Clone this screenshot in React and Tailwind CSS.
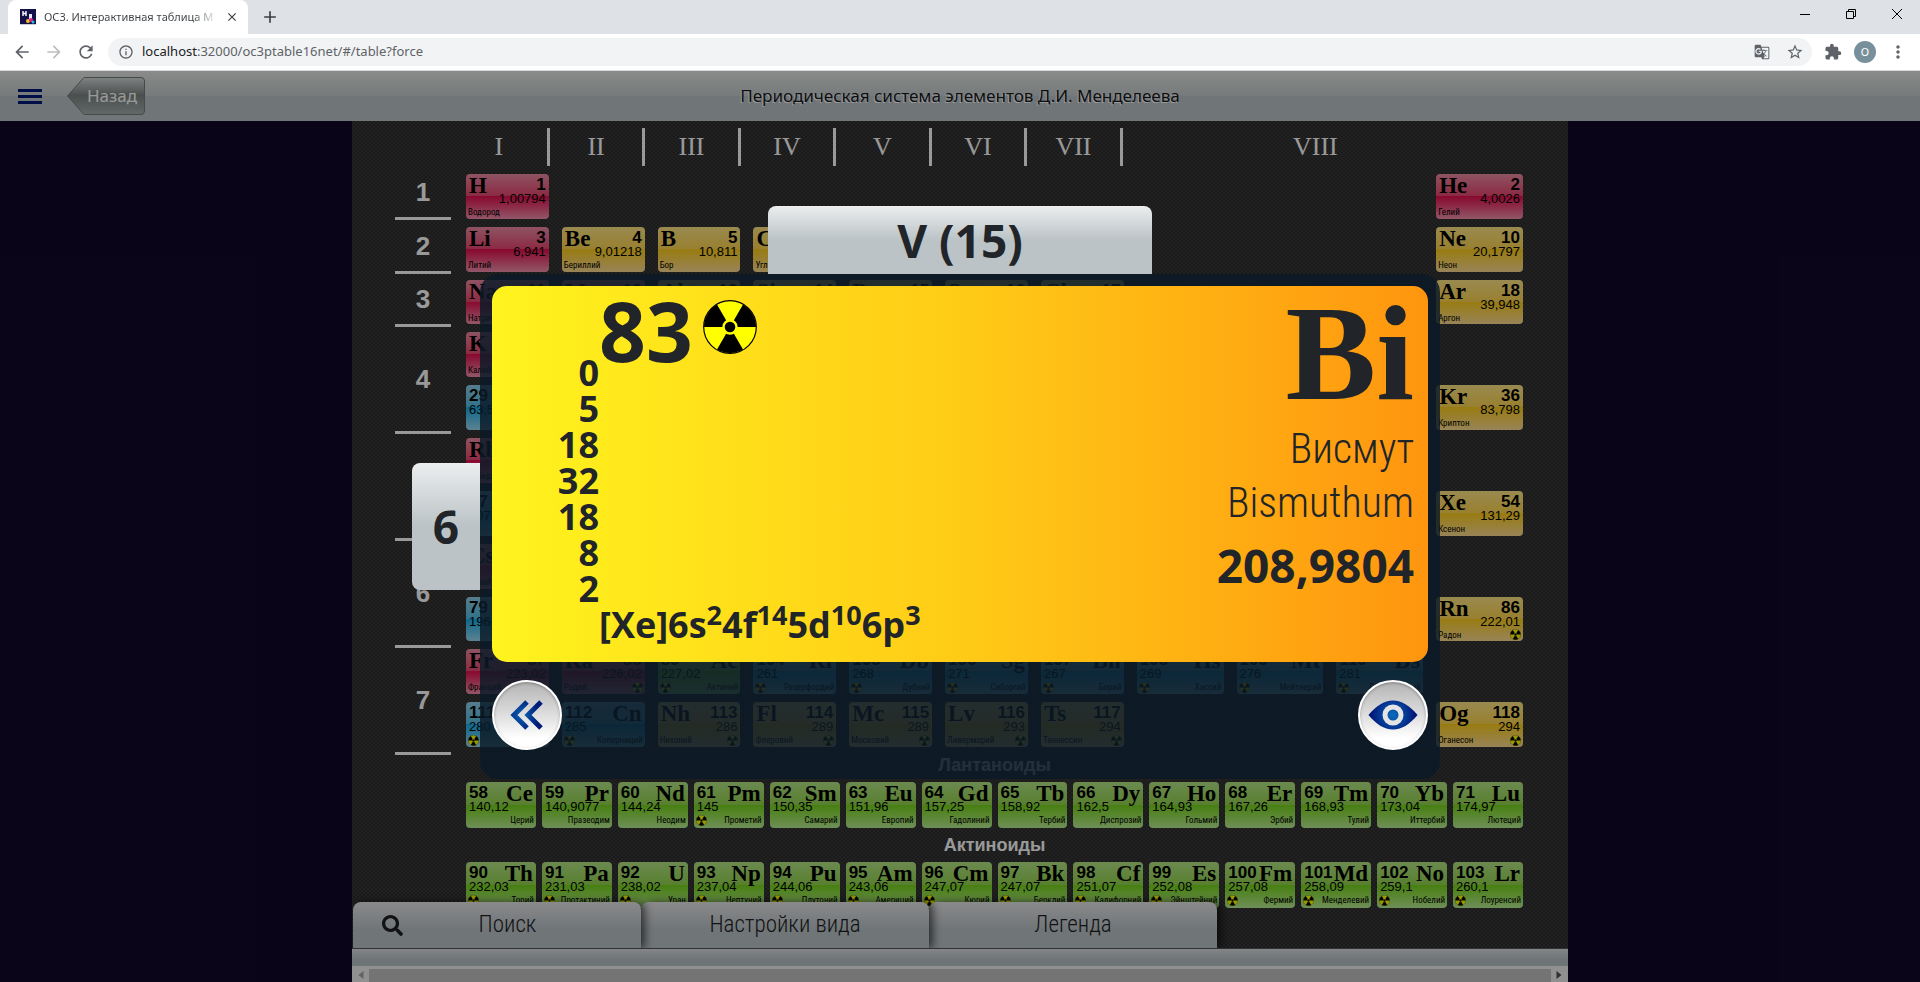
import React from 'react';
import clsx from 'clsx';
import {
  MdAdd,
  MdArrowBack,
  MdArrowForward,
  MdClose,
  MdExtension,
  MdGTranslate,
  MdInfoOutline,
  MdMoreVert,
  MdRefresh,
  MdStarBorder,
} from 'react-icons/md';
import { FaSearch } from 'react-icons/fa';

const groups = ['I', 'II', 'III', 'IV', 'V', 'VI', 'VII', 'VIII'];

const periods = [1, 2, 3, 4, 5, 6, 7];

const rows = [
  'row-start-1', 'row-start-2', 'row-start-3', 'row-start-4', 'row-start-5', 'row-start-6',
  'row-start-7', 'row-start-8', 'row-start-9', 'row-start-10', 'row-start-11',
];

const cols = [
  'col-start-1', 'col-start-2', 'col-start-3', 'col-start-4', 'col-start-5', 'col-start-6',
  'col-start-7', 'col-start-8', 'col-start-9', 'col-start-10', 'col-start-11',
];

const fills = {
  s: 'bg-[linear-gradient(#ee8ba5,#e8476f_49%,#e31150_50%,#f490ad)]',
  p: 'bg-[linear-gradient(#ffe685,#ffd650_49%,#fdce1e_50%,#fddc92)]',
  d: 'bg-[linear-gradient(#8fd0ec,#52bfe8_49%,#17aee8_50%,#9ad8f0)]',
  f: 'bg-[linear-gradient(#b4e685,#93d550_49%,#76d51b_50%,#b9ee93)]',
};

// [row, col, block, number, symbol, mass, name, radioactive]
const elements = [
  [1, 1, 's', 1, 'H', '1,00794', 'Водород'],
  [1, 11, 's', 2, 'He', '4,0026', 'Гелий'],
  [2, 1, 's', 3, 'Li', '6,941', 'Литий'],
  [2, 2, 'p', 4, 'Be', '9,01218', 'Бериллий'],
  [2, 3, 'p', 5, 'B', '10,811', 'Бор'],
  [2, 4, 'p', 6, 'C', '12,011', 'Углерод'],
  [2, 11, 'p', 10, 'Ne', '20,1797', 'Неон'],
  [3, 1, 's', 11, 'Na', '22,9898', 'Натрий'],
  [3, 2, 's', 12, 'Mg', '24,305', 'Магний'],
  [3, 3, 'p', 13, 'Al', '26,9815', 'Алюминий'],
  [3, 4, 'p', 14, 'Si', '28,086', 'Кремний'],
  [3, 5, 'p', 15, 'P', '30,9738', 'Фосфор'],
  [3, 6, 'p', 16, 'S', '32,066', 'Сера'],
  [3, 7, 'p', 17, 'Cl', '35,453', 'Хлор'],
  [3, 11, 'p', 18, 'Ar', '39,948', 'Аргон'],
  [4, 1, 's', 19, 'K', '39,098', 'Калий'],
  [5, 1, 'd', 29, 'Cu', '63,546', 'Медь'],
  [5, 11, 'p', 36, 'Kr', '83,798', 'Криптон'],
  [6, 1, 's', 37, 'Rb', '85,468', 'Рубидий'],
  [7, 1, 'd', 47, 'Ag', '107,868', 'Серебро'],
  [7, 11, 'p', 54, 'Xe', '131,29', 'Ксенон'],
  [8, 1, 's', 55, 'Cs', '132,905', 'Цезий'],
  [9, 1, 'd', 79, 'Au', '196,967', 'Золото'],
  [9, 11, 'p', 86, 'Rn', '222,01', 'Радон', true],
  [10, 1, 's', 87, 'Fr', '223,02', 'Франций'],
  [10, 2, 's', 88, 'Ra', '226,02', 'Радий', true],
  [10, 3, 'f', 89, 'Ac', '227,02', 'Актиний', true],
  [10, 4, 'd', 104, 'Rf', '261', 'Резерфордий', true],
  [10, 5, 'd', 105, 'Db', '268', 'Дубний', true],
  [10, 6, 'd', 106, 'Sg', '271', 'Сиборгий', true],
  [10, 7, 'd', 107, 'Bh', '267', 'Борий', true],
  [10, 8, 'd', 108, 'Hs', '269', 'Хассий', true],
  [10, 9, 'd', 109, 'Mt', '276', 'Мейтнерий', true],
  [10, 10, 'd', 110, 'Ds', '281', 'Дармштадтий', true],
  [11, 1, 'd', 111, 'Rg', '280', 'Рентгений', true],
  [11, 2, 'd', 112, 'Cn', '285', 'Коперниций', true],
  [11, 3, 'p', 113, 'Nh', '286', 'Нихоний', true],
  [11, 4, 'p', 114, 'Fl', '289', 'Флеровий', true],
  [11, 5, 'p', 115, 'Mc', '289', 'Московий', true],
  [11, 6, 'p', 116, 'Lv', '293', 'Ливерморий', true],
  [11, 7, 'p', 117, 'Ts', '294', 'Теннессин', true],
  [11, 11, 'p', 118, 'Og', '294', 'Оганесон', true],
];

const lanthanides = [
  [58, 'Ce', '140,12', 'Церий'],
  [59, 'Pr', '140,9077', 'Празеодим'],
  [60, 'Nd', '144,24', 'Неодим'],
  [61, 'Pm', '145', 'Прометий', true],
  [62, 'Sm', '150,35', 'Самарий'],
  [63, 'Eu', '151,96', 'Европий'],
  [64, 'Gd', '157,25', 'Гадолиний'],
  [65, 'Tb', '158,92', 'Тербий'],
  [66, 'Dy', '162,5', 'Диспрозий'],
  [67, 'Ho', '164,93', 'Гольмий'],
  [68, 'Er', '167,26', 'Эрбий'],
  [69, 'Tm', '168,93', 'Тулий'],
  [70, 'Yb', '173,04', 'Иттербий'],
  [71, 'Lu', '174,97', 'Лютеций'],
];

const actinides = [
  [90, 'Th', '232,03', 'Торий', true],
  [91, 'Pa', '231,03', 'Протактиний', true],
  [92, 'U', '238,02', 'Уран', true],
  [93, 'Np', '237,04', 'Нептуний', true],
  [94, 'Pu', '244,06', 'Плутоний', true],
  [95, 'Am', '243,06', 'Америций', true],
  [96, 'Cm', '247,07', 'Кюрий', true],
  [97, 'Bk', '247,07', 'Берклий', true],
  [98, 'Cf', '251,07', 'Калифорний', true],
  [99, 'Es', '252,08', 'Эйнштейний', true],
  [100, 'Fm', '257,08', 'Фермий', true],
  [101, 'Md', '258,09', 'Менделевий', true],
  [102, 'No', '259,1', 'Нобелий', true],
  [103, 'Lr', '260,1', 'Лоуренсий', true],
];

const shells = [0, 5, 18, 32, 18, 8, 2];

const Radiation = ({ className }) => (
  <svg viewBox="0 0 54 54" className={className} aria-hidden="true">
    <circle cx="27" cy="27" r="26.3" fill="#ffff00" stroke="#000" strokeWidth="1.2" />
    <path d="M27 27H1A26 26 0 0 1 14 4.5Z" />
    <path d="M27 27H53A26 26 0 0 0 40 4.5Z" />
    <path d="M27 27L14 49.5A26 26 0 0 0 40 49.5Z" />
    <circle cx="27" cy="27" r="6.5" fill="#000" stroke="#ffff00" strokeWidth="2.4" />
  </svg>
);

const ElementCell = ({ block, number, symbol, mass, name, radioactive, place }) => {
  // d and f elements carry the number on the left, s and p on the right
  const flip = block === 'd' || block === 'f';
  return (
    <button
      type="button"
      className={clsx(
        'flex min-w-0 flex-col overflow-hidden rounded-[4px] whitespace-nowrap text-black',
        fills[block],
        place
      )}
    >
      <span className={clsx('flex h-[18px] w-full justify-between px-[3px]', flip && 'flex-row-reverse')}>
        <span className="font-['Liberation_Serif',serif] text-[23px] leading-[24px] font-bold">{symbol}</span>
        <span className="text-[17px] leading-[22px] font-bold">{number}</span>
      </span>
      <span className={clsx('h-[14px] w-full px-[3px] text-[13px] leading-[14px]', flip ? 'text-left' : 'text-right')}>
        {mass}
      </span>
      <span
        className={clsx(
          "flex h-[12px] w-full items-center justify-between px-[2px] font-['Roboto_Condensed',Roboto,sans-serif] text-[9px] leading-[12px]",
          flip && 'flex-row-reverse'
        )}
      >
        <span>{name}</span>
        {radioactive && <Radiation className="size-[11px] shrink-0" />}
      </span>
    </button>
  );
};

const Series = ({ title, items }) => (
  <>
    <h2 className="h-[34px] text-center text-[18px] leading-[34px] font-bold text-white">{title}</h2>
    <div className="grid h-[46px] grid-cols-14 gap-x-[6px]">
      {items.map(([number, symbol, mass, name, radioactive]) => (
        <ElementCell
          key={number}
          block="f"
          number={number}
          symbol={symbol}
          mass={mass}
          name={name}
          radioactive={radioactive}
        />
      ))}
    </div>
  </>
);

const BrowserBar = () => (
  <div className="shrink-0 font-['Noto_Sans',sans-serif]">
    {/* Tab strip */}
    <div className="flex h-[34px] items-center bg-[#dee1e6] pl-2">
      <div className="flex h-full w-[240px] items-center rounded-t-lg bg-white pr-[9px] pl-3">
        <svg viewBox="0 0 16 16" className="size-4 shrink-0" aria-hidden="true">
          <rect width="16" height="16" fill="#14104a" />
          <path d="M3 2v5M6 2v5M3 4.500h3" stroke="#fff" strokeWidth="1.400" />
          <rect x="9" y="5" width="3" height="6" fill="#e9e9f5" />
          <circle cx="8" cy="12" r="2" fill="#f4c01e" />
          <circle cx="11" cy="11" r="2" fill="#e0218a" />
          <circle cx="13" cy="13" r="1.500" fill="#29b6e8" />
          <path d="M0 15.500h16" stroke="#c9ccd6" />
        </svg>
        <span className="ml-2 bg-linear-to-r from-[#3c4043] from-88% to-[#3c4043]/20 bg-clip-text text-[11px] whitespace-nowrap text-transparent">
          ОС3. Интерактивная таблица М
        </span>
        <button type="button" aria-label="Закрыть вкладку" className="ml-auto">
          <MdClose className="size-[14px] text-[#3c4043]" />
        </button>
      </div>
      <button type="button" aria-label="Новая вкладка" className="ml-3">
        <MdAdd className="size-5 text-[#3c4043]" />
      </button>
      <div className="mb-1.5 ml-auto flex">
        <button type="button" aria-label="Свернуть" className="grid w-[46px] place-items-center">
          <svg viewBox="0 0 10 10" className="size-[10px]"><path d="M0 5.500h10" stroke="#000" /></svg>
        </button>
        <button type="button" aria-label="Восстановить" className="grid w-[46px] place-items-center">
          <svg viewBox="0 0 10 10" className="size-[10px]" fill="none" stroke="#000">
            <path d="M.5 2.500h7v7h-7zM2.500 2.500v-2h7v7h-2" />
          </svg>
        </button>
        <button type="button" aria-label="Закрыть" className="grid w-[46px] place-items-center">
          <svg viewBox="0 0 10 10" className="size-[10px]"><path d="M0 0l10 10M10 0L0 10" stroke="#000" /></svg>
        </button>
      </div>
    </div>

    {/* Address bar */}
    <div className="flex h-[37px] items-center border-b border-[#d5d8dc] bg-white pr-3 pl-3 text-[#5f6368]">
      <button type="button" aria-label="Назад по истории"><MdArrowBack className="size-5" /></button>
      <button type="button" aria-label="Вперёд" className="ml-3 text-[#bcbec1]"><MdArrowForward className="size-5" /></button>
      <button type="button" aria-label="Обновить" className="ml-3"><MdRefresh className="size-5" /></button>
      <div className="ml-3 flex h-7 flex-1 items-center rounded-full bg-[#f1f3f4] pr-2 pl-2.5">
        <MdInfoOutline className="size-4 shrink-0" />
        <span className="ml-2 flex-1 text-[13px]">
          <span className="text-[#202124]">localhost</span>:32000/oc3ptable16net/#/table?force
        </span>
        <MdGTranslate className="size-4" />
        <MdStarBorder className="ml-4 size-[18px]" />
      </div>
      <MdExtension className="ml-3 size-[18px]" />
      <span className="ml-3 grid size-[22px] place-items-center rounded-full bg-[#78909c] text-[11px] text-white">О</span>
      <MdMoreVert className="ml-3 size-5" />
    </div>
  </div>
);

const Header = () => (
  <header className="grid h-[50px] shrink-0 grid-cols-[1fr_auto_1fr] items-center bg-[linear-gradient(#e6e7e7,#c6cccc_50%,#bbc4c8_50%,#bbc4c8)] font-['Noto_Sans',sans-serif]">
    <div className="flex items-center pl-[18px]">
      <button type="button" aria-label="Меню" className="flex w-6 flex-col gap-[3px]">
        <span className="h-[3px] bg-[#001a78]" />
        <span className="h-[3px] bg-[#001a78]" />
        <span className="h-[3px] bg-[#001a78]" />
      </button>
      <button type="button" className="relative ml-[25px] h-[38px] w-[78px] pl-3 text-[17px] text-white">
        <svg viewBox="0 0 78 38" className="absolute inset-0 size-full" aria-hidden="true">
          <defs>
            <linearGradient id="back" x2="0" y2="1">
              <stop offset="0" stopColor="#d6dada" />
              <stop offset=".48" stopColor="#7c8483" />
              <stop offset="1" stopColor="#a3afac" />
            </linearGradient>
          </defs>
          <path d="M17 .5H74a3.500 3.500 0 0 1 3.500 3.500V34a3.500 3.500 0 0 1-3.500 3.500H17L.5 19Z" fill="url(#back)" stroke="#737a7c" />
        </svg>
        <span className="relative">Назад</span>
      </button>
    </div>
    <h1 className="text-[17px] text-[#16191d] [text-shadow:-1px_1px_0_#fff]">
      Периодическая система элементов Д.И. Менделеева
    </h1>
  </header>
);

const Board = () => (
  <main className="mx-auto flex h-full w-full max-w-[1216px] flex-col bg-[#2c2c2c] bg-[radial-gradient(#3a3a3a_1px,transparent_1px),radial-gradient(#3a3a3a_1px,transparent_1px)] bg-[length:4px_4px] bg-[position:0_0,2px_2px] font-['Liberation_Sans',sans-serif]">
    <div className="min-h-0 flex-1 pr-[45px] pl-[43px]">
      <div className="grid grid-cols-[297fr_repeat(6,287fr)_1158fr] pt-[7px] pr-[15px] pl-[56px]">
        {groups.map((g) => (
          <div
            key={g}
            className="h-[38px] border-r-[3px] border-white text-center font-['Liberation_Serif',serif] text-[26px] leading-[38px] text-white last:border-r-0"
          >
            {g}
          </div>
        ))}
      </div>

      <div className="flex">
        {/* Period numbers, from the fourth on each spans two rows */}
        <div className="mt-px grid h-[588px] w-14 grid-rows-[1fr_1fr_1fr_2fr_2fr_2fr_2fr]">
          {periods.map((n) => (
            <div
              key={n}
              className="flex items-center justify-center border-b-[3px] border-white text-[26px] leading-8 font-bold text-white"
            >
              {n}
            </div>
          ))}
        </div>

        <div className="ml-[15px] flex-1 pt-2">
          <div className="mb-px grid h-[573px] grid-cols-[repeat(7,83fr)_repeat(4,87fr)] grid-rows-11 gap-x-[13px] gap-y-2">
            {elements.map(([row, col, block, number, symbol, mass, name, radioactive]) => (
              <ElementCell
                key={number}
                block={block}
                number={number}
                symbol={symbol}
                mass={mass}
                name={name}
                radioactive={radioactive}
                place={clsx(rows[row - 1], cols[col - 1])}
              />
            ))}
          </div>
          <Series title="Лантаноиды" items={lanthanides} />
          <Series title="Актиноиды" items={actinides} />
        </div>
      </div>
    </div>

    {/* Bottom tabs */}
    <div className="relative -mt-[46px] flex h-[46px] pl-px font-['Roboto_Condensed',Roboto,sans-serif] text-[23px] font-light text-[#1b1e22]">
      <button
        type="button"
        className="z-30 flex w-[288px] items-center rounded-t-lg bg-[linear-gradient(#e6e6e8,#bbc3c8_60%)] px-[29px] shadow-[4px_0_8px_rgba(0,0,0,0.6)]"
      >
        <FaSearch className="size-[21px]" />
        <span className="flex-1">Поиск</span>
      </button>
      <button
        type="button"
        className="z-20 w-[288px] rounded-t-lg bg-[linear-gradient(#e6e6e8,#bbc3c8_60%)] shadow-[4px_0_8px_rgba(0,0,0,0.6)]"
      >
        Настройки вида
      </button>
      <button
        type="button"
        className="z-10 w-[288px] rounded-t-lg bg-[linear-gradient(#e6e6e8,#bbc3c8_60%)] shadow-[4px_0_8px_rgba(0,0,0,0.6)]"
      >
        Легенда
      </button>
    </div>
    <div className="relative z-40 h-[18px] shrink-0 border-t border-[#50555a] bg-[linear-gradient(#dcdfe0,#bac3c7_60%)]" />

    {/* Horizontal scrollbar */}
    <div className="relative z-40 flex h-4 shrink-0 items-center gap-[5px] border-t-2 border-[#f1f1f1] bg-[#f1f1f1] px-1.5">
      <svg viewBox="0 0 5 8" className="h-2 w-[6px]"><path d="M5 0v8L0 4z" fill="#a3a3a3" /></svg>
      <div className="h-[13px] flex-1 bg-[#c1c1c1]" />
      <svg viewBox="0 0 5 8" className="h-2 w-[6px]"><path d="M0 0v8l5-4z" fill="#505050" /></svg>
    </div>
  </main>
);

const RoundButton = ({ label, children }) => (
  <button
    type="button"
    aria-label={label}
    className="grid size-[70px] place-items-center rounded-full border-2 border-white bg-[linear-gradient(#b4b4b4,#dedede_50%,#ffffff_85%)] shadow-[inset_0_1px_3px_rgba(0,0,0,0.3)]"
  >
    {children}
  </button>
);

const ElementDialog = () => (
  <div className="absolute inset-0 z-50 flex items-center justify-center bg-black/40 font-['Open_Sans',sans-serif] text-[#212529]">
    <section
      role="dialog"
      aria-label="Висмут"
      className="relative w-full max-w-[960px] rounded-[18px] bg-[#0b1a28]/83 px-3 pt-3 pb-[29px]"
    >
      {/* Group and period labels sit outside the panel */}
      <div className="absolute bottom-full left-[30%] flex h-[68px] w-2/5 items-center justify-center rounded-t-lg bg-[linear-gradient(#eceeef,#bbc3c6_50%)] text-[46px] font-bold">
        V (15)
      </div>
      <div className="absolute top-[189px] right-full flex h-[127px] w-[68px] items-center justify-center rounded-l-lg bg-[linear-gradient(#eceeef,#bbc3c6_50%)] text-[46px] font-bold">
        6
      </div>

      <div className="flex justify-between rounded-[15px] bg-linear-to-r from-[#fff41e] via-[#ffcb16] to-[#ff950f] pr-[14px] pb-[19px]">
        <div>
          <div className="flex h-[69px] items-start pl-[107px]">
            <span className="text-[82px] leading-[88px] font-bold">83</span>
            <Radiation className="mt-[14px] ml-[10px] size-[54px]" />
          </div>
          <ul className="w-[107px] text-right text-[36px] leading-[36px] font-bold">
            {shells.map((count, i) => (
              <li key={i}>{count}</li>
            ))}
          </ul>
          <p className="pl-[107px] text-[36px] leading-[36px] font-bold">
            [Xe]6s<sup>2</sup>4f<sup>14</sup>5d<sup>10</sup>6p<sup>3</sup>
          </p>
        </div>

        <div className="text-right">
          <p className="h-[136px] font-['Liberation_Serif',serif] text-[136px] leading-[134px] font-bold">Bi</p>
          <p className="font-['Roboto_Condensed',Roboto,sans-serif] text-[42px] leading-[54px] font-light">Висмут</p>
          <p className="font-['Roboto_Condensed',Roboto,sans-serif] text-[42px] leading-[54px] font-light">Bismuthum</p>
          <p className="mt-2 text-[46px] leading-[54px] font-bold">208,9804</p>
        </div>
      </div>

      <div className="mt-[18px] flex justify-between">
        <RoundButton label="Свернуть карточку">
          <svg viewBox="0 0 34 30" className="h-[30px] w-[34px]" fill="none" stroke="url(#chev)" strokeWidth="5">
            <defs>
              <radialGradient id="chev" gradientUnits="userSpaceOnUse" cx="12" cy="15" r="18">
                <stop offset="0" stopColor="#0a63b4" />
                <stop offset="1" stopColor="#001a78" />
              </radialGradient>
            </defs>
            <path d="M17 2L4 15l13 13M31 2L18 15l13 13" />
          </svg>
        </RoundButton>
        <RoundButton label="Просмотр">
          <svg viewBox="0 0 50 30" className="h-[30px] w-[50px]">
            <defs>
              <radialGradient id="eye" gradientUnits="userSpaceOnUse" cx="25" cy="15" r="25">
                <stop offset="0" stopColor="#0a6cbc" />
                <stop offset="1" stopColor="#000a70" />
              </radialGradient>
            </defs>
            <path d="M.5 15C8 6 16 .5 25 .5S42 6 49.500 15C42 24 34 29.500 25 29.500S8 24 .5 15Z" fill="url(#eye)" />
            <circle cx="25" cy="15" r="10.500" fill="#e4e4e4" />
            <circle cx="25" cy="15" r="5.500" fill="url(#eye)" />
          </svg>
        </RoundButton>
      </div>
    </section>
  </div>
);

const App = () => {
  return (
    <div className="flex h-screen flex-col overflow-hidden">
      <BrowserBar />
      <div className="relative flex min-h-0 flex-1 flex-col bg-[#100828]">
        <Header />
        <div className="min-h-0 flex-1">
          <Board />
        </div>
        <ElementDialog />
      </div>
    </div>
  );
};

export default App;
